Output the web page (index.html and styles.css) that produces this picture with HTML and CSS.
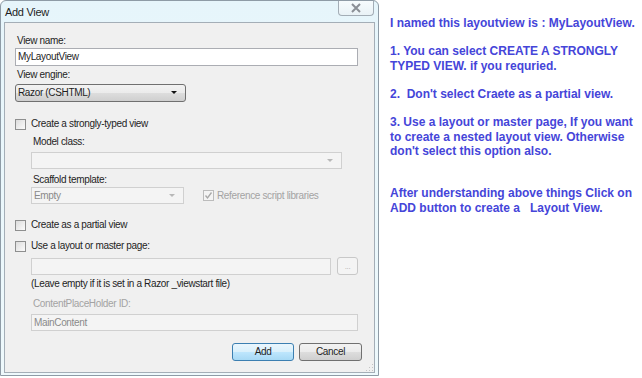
FILE: index.html
```html
<!DOCTYPE html>
<html lang="en">
<head>
    <meta charset="UTF-8">
    <title>Add View</title>
    <link rel="stylesheet" href="styles.css">
</head>
<body>
    <div class="page">
        <div class="window">
            <div class="titlebar">
                <span class="title">Add View</span>
                <span class="close">
                    <svg width="12" height="10" viewBox="0 0 12 10"><path d="M2 1 L10 9 M10 1 L2 9" stroke="#8a8f96" stroke-width="2" fill="none"/></svg>
                </span>
            </div>
            <div class="panel">
                <div class="label">View name:</div>
                <div class="field wide">MyLayoutView</div>

                <div class="label gap2">View engine:</div>
                <div class="select engine">Razor (CSHTML)<span class="arrow"></span></div>

                <div class="check-row gap15"><span class="box"></span>Create a strongly-typed view</div>

                <div class="indent">
                    <div class="label gap4">Model class:</div>
                    <div class="field off model"><span class="arrow grey"></span></div>

                    <div class="label gap4">Scaffold template:</div>
                    <div class="scaffold">
                        <div class="field off template">Empty<span class="arrow grey"></span></div>
                        <div class="check-row ref"><span class="box off">
                            <svg width="9" height="9" viewBox="0 0 9 9"><path d="M1.5 4.5 L3.5 7 L7.5 1.5" stroke="#a8a8a8" stroke-width="1.3" fill="none"/></svg>
                        </span>Reference script libraries</div>
                    </div>
                </div>

                <div class="check-row gap14"><span class="box"></span>Create as a partial view</div>
                <div class="check-row gap7"><span class="box"></span>Use a layout or master page:</div>

                <div class="indent">
                    <div class="master">
                        <div class="field off path"></div>
                        <div class="dots">...</div>
                    </div>
                    <div class="label hint">(Leave empty if it is set in a Razor _viewstart file)</div>
                    <div class="label muted gap6">ContentPlaceHolder ID:</div>
                    <div class="field off holder">MainContent</div>
                </div>

                <div class="buttons">
                    <div class="btn add">Add</div>
                    <div class="btn">Cancel</div>
                </div>
                <div class="grip"></div>
            </div>
        </div>

        <div class="notes">
            <p>I named this layoutview is : MyLayoutView.</p>
            <p>1. You can select CREATE A STRONGLY TYPED VIEW. if you requried.</p>
            <p>2.&nbsp; Don't select Craete as a partial view.</p>
            <p>3. Use a layout or master page, If you want to create a nested layout view. Otherwise don't select this option also.</p>
            <p class="last">After understanding above things Click on ADD button to create a &nbsp; Layout View.</p>
        </div>
    </div>
</body>
</html>
```

FILE: styles.css
```css
body {
    margin: 0;
    background: #fff;
    font-family: "Liberation Sans", Arial, sans-serif;
}
.page {
    display: flex;
    align-items: flex-start;
}
.window {
    width: 379px;
    height: 376px;
    box-sizing: border-box;
    border: 1px solid #8e9ba6;
    border-radius: 6px 6px 0 0;
    background: linear-gradient(#e6f5fb, #eef9fc);
    padding: 0 3px 2px 3px;
    display: flex;
    flex-direction: column;
    flex-shrink: 0;
}
.titlebar {
    height: 21px;
    display: flex;
    justify-content: space-between;
    align-items: flex-start;
}
.title {
    font-size: 11px;
    color: #1e1e1e;
    margin: 5px 0 0 1px;
    letter-spacing: -0.3px;
}
.close {
    width: 34px;
    height: 14px;
    margin-right: 1px;
    border: 1px solid #a3adb6;
    border-top: none;
    border-radius: 0 0 4px 4px;
    background: linear-gradient(#f6fbfd, #e9f2f6);
    display: flex;
    align-items: center;
    justify-content: center;
}
.panel {
    flex: 1;
    position: relative;
    border: 1px solid #a4aeb7;
    background: #f0f0f0;
    padding: 11px 11px 0 10px;
    font-size: 10px;
    letter-spacing: -0.35px;
    color: #1e1e1e;
}
.label {
    height: 14px;
    line-height: 14px;
    padding-left: 2px;
}
.gap2 { margin-top: 2px; }
.gap4 { margin-top: 4px; }
.gap6 { margin-top: 6px; }
.gap7 { margin-top: 7px; }
.gap14 { margin-top: 14px; }
.gap15 { margin-top: 15px; }
.muted { color: #a3a3a3; }
.field {
    position: relative;
    box-sizing: border-box;
    height: 18px;
    line-height: 16px;
    border: 1px solid #abadb3;
    background: #fff;
    padding-left: 2px;
}
.field.off {
    height: 17px;
    line-height: 15px;
    border-color: #d0d0d0;
    background: #f4f4f4;
    color: #8a8a8a;
}
.wide { width: 343px; }
.select {
    position: relative;
    box-sizing: border-box;
    width: 171px;
    height: 18px;
    line-height: 16px;
    margin-top: 2px;
    padding-left: 2px;
    border: 1px solid #707070;
    border-radius: 3px;
    background: linear-gradient(#f2f2f2, #ebebeb 50%, #dddddd 51%, #cfcfcf);
}
.arrow {
    position: absolute;
    right: 8px;
    top: 6px;
    border-left: 3px solid transparent;
    border-right: 3px solid transparent;
    border-top: 3px solid #111;
}
.arrow.grey {
    border-top-color: #b8b8b8;
}
.check-row {
    height: 14px;
    line-height: 14px;
    display: flex;
    align-items: center;
}
.box {
    box-sizing: border-box;
    width: 11px;
    height: 11px;
    margin-right: 5px;
    border: 1px solid #8e8f8f;
    background: linear-gradient(135deg, #dcdcdc, #fbfbfb);
    display: flex;
    align-items: center;
    justify-content: center;
}
.box.off {
    border-color: #bcbcbc;
    background: #f4f4f4;
    margin-right: 3px;
}
.indent {
    margin-left: 16px;
}
.model {
    width: 311px;
    margin-top: 3px;
}
.scaffold {
    display: flex;
    align-items: center;
}
.template {
    width: 153px;
}
.ref {
    margin-left: 19px;
    color: #a3a3a3;
}
.master {
    display: flex;
    margin-top: 5px;
}
.path {
    width: 300px;
}
.dots {
    box-sizing: border-box;
    width: 21px;
    height: 18px;
    margin-left: 6px;
    margin-top: -1px;
    border: 1px solid #c8c8c8;
    border-radius: 3px;
    background: #f4f4f4;
    color: #b0b0b0;
    font-size: 8px;
    text-align: center;
    line-height: 18px;
}
.hint {
    margin-top: 2px;
    padding-left: 0;
}
.holder {
    width: 327px;
    margin-top: 3px;
}
.buttons {
    display: flex;
    justify-content: flex-end;
    gap: 5px;
    margin: 12px 1px 0 0;
}
.btn {
    box-sizing: border-box;
    width: 63px;
    height: 18px;
    line-height: 16px;
    text-align: center;
    border: 1px solid #707070;
    border-radius: 3px;
    background: linear-gradient(#f2f2f2, #ebebeb 50%, #dddddd 51%, #cfcfcf);
}
.btn.add {
    width: 62px;
    border-color: #3c7fb1;
    background: linear-gradient(#eaf6fd, #d9f0fc 50%, #bee6fd 51%, #a7d9f5);
}
.grip {
    position: absolute;
    right: 1px;
    bottom: 1px;
    width: 8px;
    height: 8px;
    background: radial-gradient(circle, #c4c4c4 0.8px, transparent 1px) 0 0 / 3px 3px;
    clip-path: polygon(100% 0, 100% 100%, 0 100%);
}
.notes {
    margin: 16px 0 0 11px;
    width: 250px;
    color: #4545d9;
    font-size: 12px;
    font-weight: bold;
    line-height: 14.2px;
}
.notes p {
    margin: 0 0 14.2px 0;
}
.notes p:nth-child(4) {
    margin-bottom: 28.4px;
}
```
